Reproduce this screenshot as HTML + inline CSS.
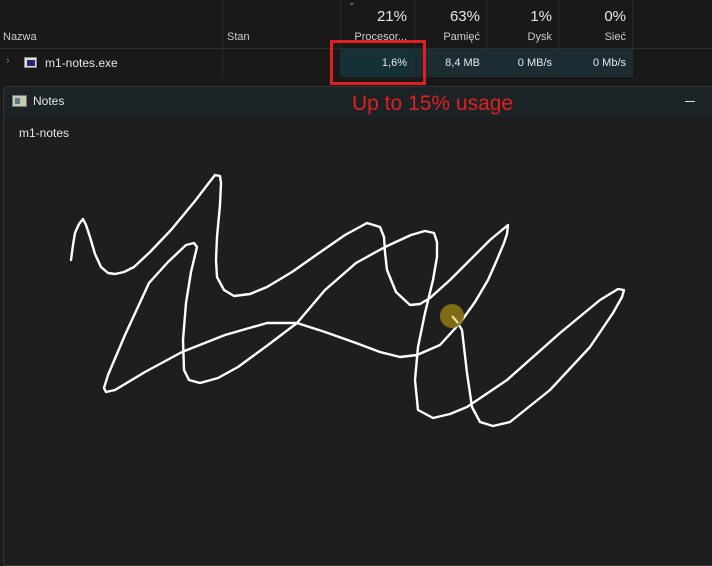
<!DOCTYPE html>
<html><head><meta charset="utf-8"><style>
*{margin:0;padding:0;box-sizing:border-box}
body{width:712px;height:557px;background:#1b1b1b;position:relative;overflow:hidden;font-family:"Liberation Sans",sans-serif;color:#e8e8e8}
.a{position:absolute;white-space:nowrap}
.sep{position:absolute;top:0;width:1px;height:77px;background:#2a2a2a}
.r{text-align:right}
</style></head><body>
<div class="a" style="left:0;top:0;width:712px;height:86px;background:#191919"></div>
<div class="a" style="left:0;top:48px;width:712px;height:1px;background:#2e2e2e"></div>
<div class="sep" style="left:222px"></div>
<div class="sep" style="left:340px"></div>
<div class="sep" style="left:414px"></div>
<div class="sep" style="left:486px"></div>
<div class="sep" style="left:558px"></div>
<div class="sep" style="left:632px"></div>
<div class="a" style="left:340px;top:49px;width:292px;height:28px;background:#1b2d32"></div>
<div class="a" style="left:341px;top:49px;width:73px;height:28px;background:#163038"></div>
<div class="a" style="left:350px;top:2px;font-size:11px;color:#bbb">ˇ</div>
<div class="a r" style="left:340px;width:67px;top:8px;font-size:15px">21%</div>
<div class="a r" style="left:414px;width:66px;top:8px;font-size:15px">63%</div>
<div class="a r" style="left:486px;width:66px;top:8px;font-size:15px">1%</div>
<div class="a r" style="left:558px;width:68px;top:8px;font-size:15px">0%</div>
<div class="a" style="left:3px;top:31px;font-size:11px;color:#ccc">Nazwa</div>
<div class="a" style="left:227px;top:31px;font-size:11px;color:#ccc">Stan</div>
<div class="a r" style="left:340px;width:67px;top:31px;font-size:11px;color:#ccc;overflow:hidden">Procesor...</div>
<div class="a r" style="left:414px;width:66px;top:31px;font-size:11px;color:#ccc">Pamięć</div>
<div class="a r" style="left:486px;width:66px;top:31px;font-size:11px;color:#ccc">Dysk</div>
<div class="a r" style="left:558px;width:68px;top:31px;font-size:11px;color:#ccc">Sieć</div>
<div class="a" style="left:6px;top:55px;font-size:11px;color:#777">›</div>
<div class="a" style="left:24px;top:57px;width:13px;height:11px;background:#e8e0c8;border:1px solid #888"><div style="position:absolute;left:2px;top:2px;width:8px;height:6px;background:#1a2a7a"></div></div>
<div class="a" style="left:45px;top:56px;font-size:12px">m1-notes.exe</div>
<div class="a r" style="left:340px;width:67px;top:57px;font-size:11px">1,6%</div>
<div class="a r" style="left:414px;width:66px;top:57px;font-size:11px">8,4 MB</div>
<div class="a r" style="left:486px;width:66px;top:57px;font-size:11px">0 MB/s</div>
<div class="a r" style="left:558px;width:68px;top:57px;font-size:11px">0 Mb/s</div>
<div class="a" style="left:3px;top:86px;width:712px;height:480px;background:#1e1e1e;border:1px solid #333;border-radius:6px 0 0 0"></div>
<div class="a" style="left:4px;top:87px;width:708px;height:31px;background:#1b2327;border-radius:6px 0 0 0"></div>
<div class="a" style="left:12px;top:95px;width:15px;height:12px;background:#c8c8b0;border:1px solid #777"><div style="position:absolute;left:2px;top:2px;width:5px;height:6px;background:#5a7a8a"></div></div>
<div class="a" style="left:33px;top:94px;font-size:12px">Notes</div>
<div class="a" style="left:685px;top:101px;width:10px;height:1px;background:#ddd"></div>
<div class="a" style="left:19px;top:126px;font-size:12px">m1-notes</div>
<div class="a" style="left:330px;top:40px;width:96px;height:45px;border:3px solid #e02020"></div>
<div class="a" style="left:352px;top:92px;font-size:21px;color:#e0201f">Up to 15% usage</div>
<svg class="a" style="left:0;top:0" width="712" height="557">
<polyline fill="none" stroke="#fff" stroke-width="2.4" stroke-linejoin="round" stroke-linecap="round" points="71,260 73,245 75,233 79,224 83,219 86,225 90,237 95,254 101,267 108,273 115,274 124,272 134,267 150,252 171,230 195,201 208,184 215,175 220,176 221,183 220,205 217,237 216,260 217,277 224,290 234,296 250,294 267,287 292,272 319,253 345,235 367,223 380,227 384,237 385,252 387,270 396,292 410,305 420,304 430,298 450,280 467,263 490,240 508,225 507,234 504,243 496,262 488,280 475,302 460,323 440,345 417,355 400,357 380,352 356,343 325,332 297,323 267,323 225,335 182,352 145,372 115,390 106,392 104,388 108,375 125,335 149,283 168,262 186,245 194,243 197,247 191,272 186,303 183,340 184,370 189,380 200,383 218,378 238,367 268,345 297,323 325,290 356,263 385,247 411,235 425,231 434,233 437,242 437,257 433,280 425,313 418,347 415,380 418,410 433,418 450,414 467,407 507,380 560,333 600,300 618,289 624,290 622,297 613,313 590,347 550,390 510,422 493,426 480,422 472,407 467,373 462,330 455,318"/>
<circle cx="452" cy="316" r="12" fill="#8a7215" opacity="0.9"/>
<line x1="452" y1="316" x2="458" y2="323" stroke="#f4e8b0" stroke-width="2"/>
</svg>
</body></html>
